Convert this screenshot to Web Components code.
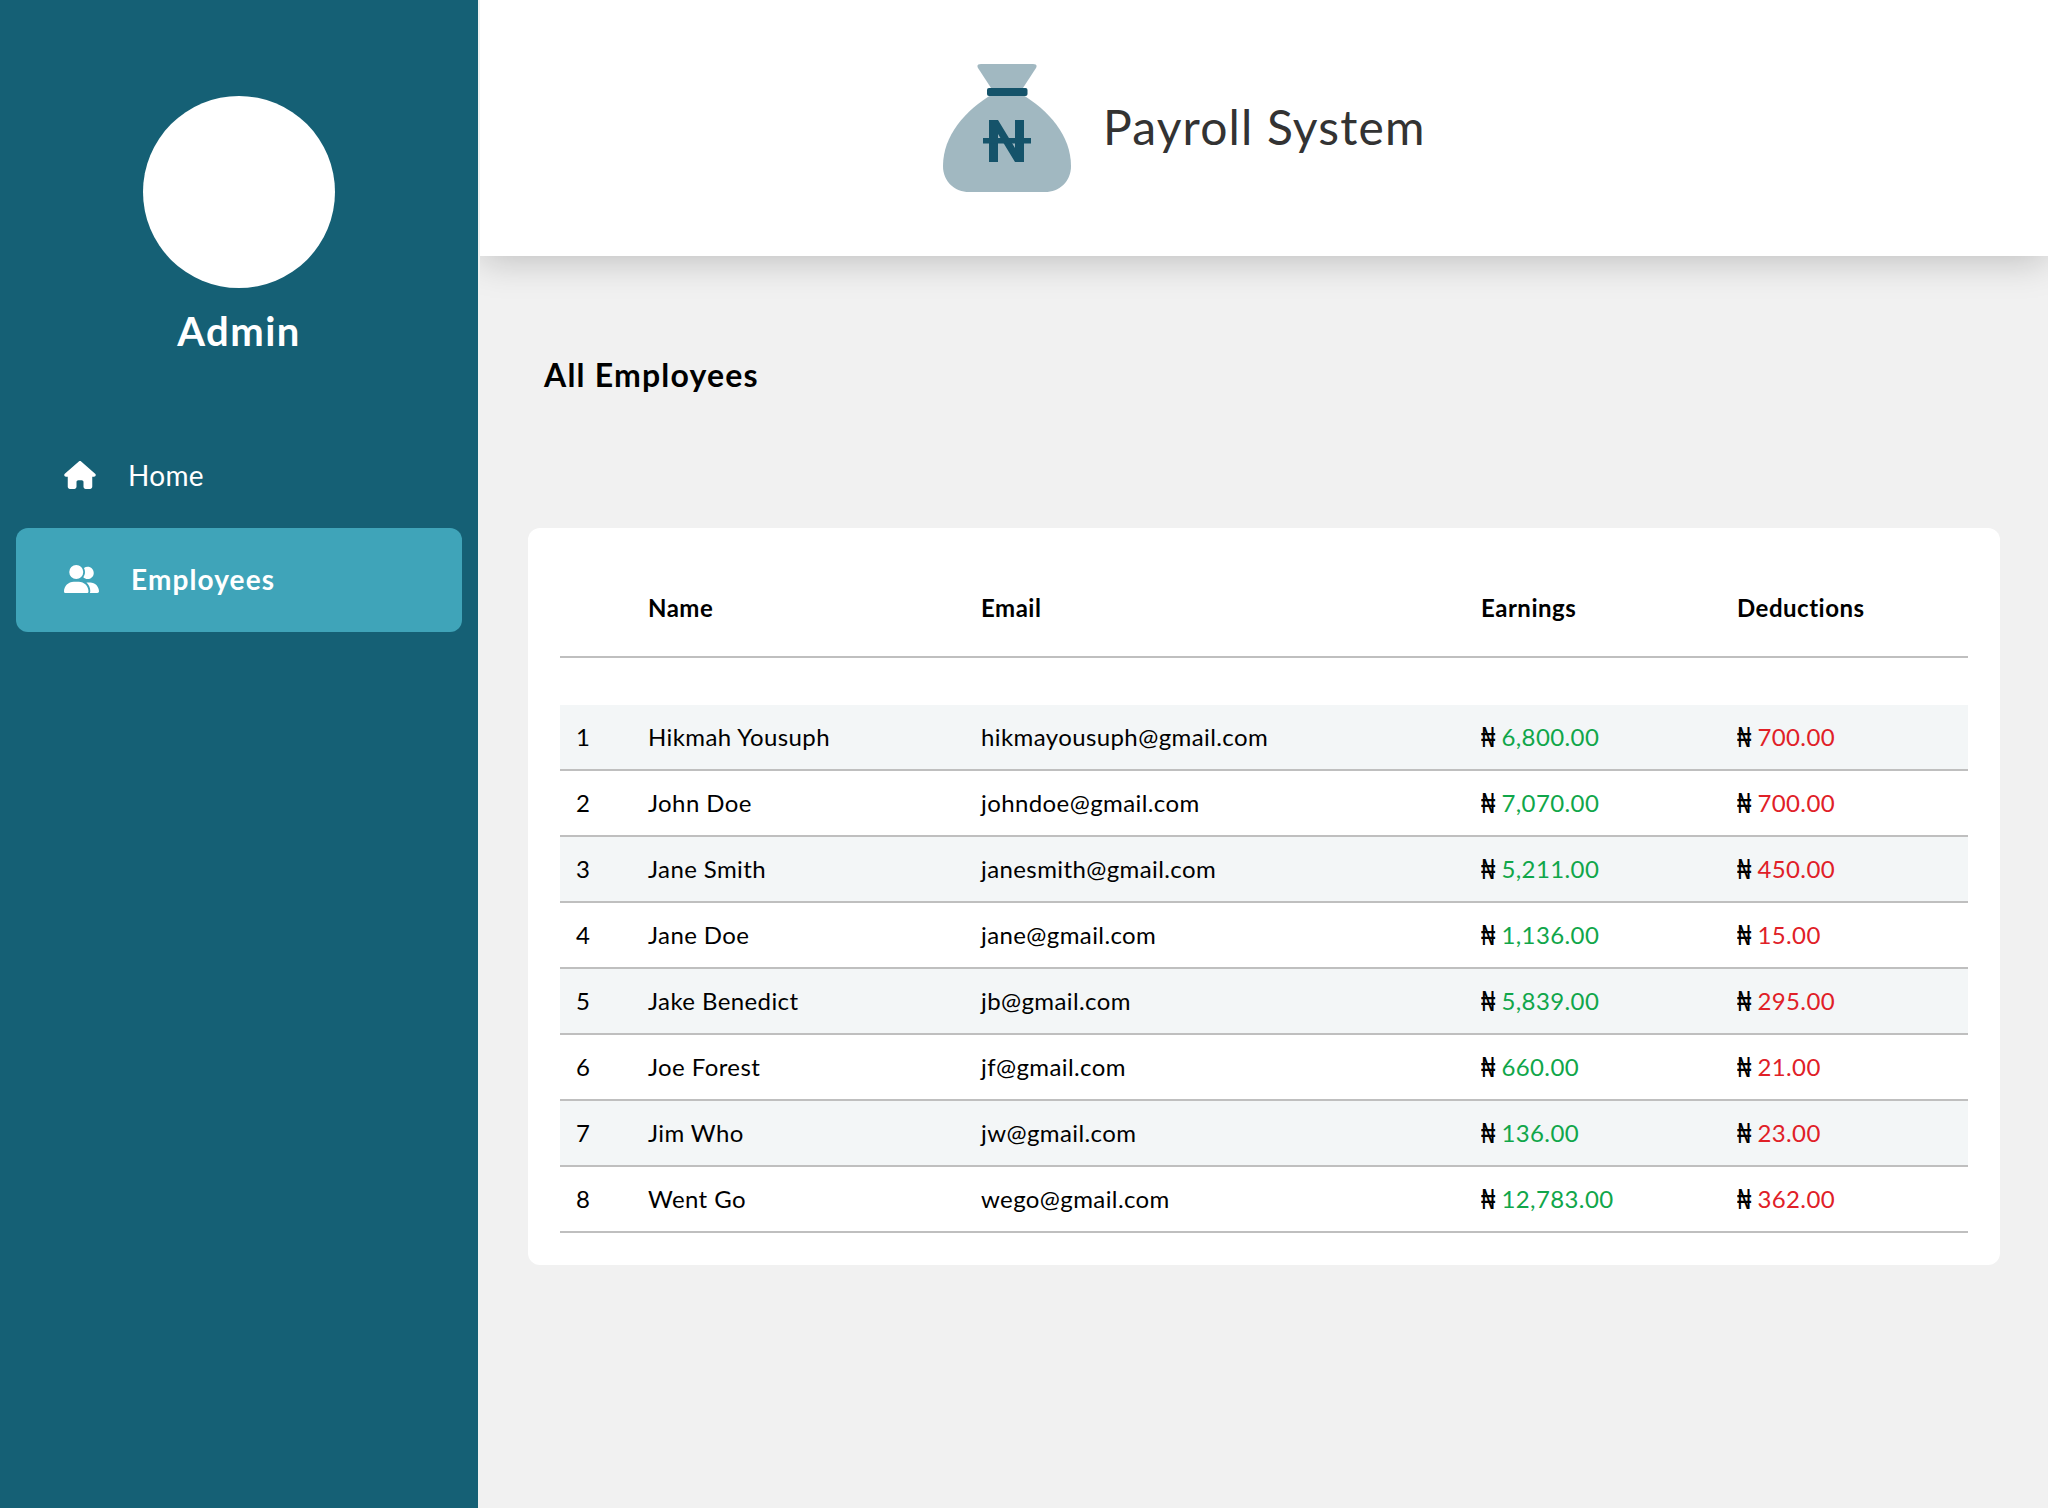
<!DOCTYPE html>
<html lang="en"><head><meta charset="utf-8"><title>Payroll System</title>
<style>
html,body{margin:0;padding:0;height:100%}
body{background:#f1f1f1;font-family:Lato,"Noto Sans",sans-serif;color:#000;}
</style></head><body>
<payroll-app>
  <app-sidebar slot="sidebar" name="Admin">
    <nav-item icon="home">Home</nav-item>
    <nav-item icon="users" active>Employees</nav-item>
  </app-sidebar>
  <app-header slot="header" title-text="Payroll System"></app-header>
  <page-title>All Employees</page-title>
  <employee-table>
    <employee-row n="1" name="Hikmah Yousuph" email="hikmayousuph@gmail.com" earn="6,800.00" ded="700.00"></employee-row>
    <employee-row n="2" name="John Doe" email="johndoe@gmail.com" earn="7,070.00" ded="700.00"></employee-row>
    <employee-row n="3" name="Jane Smith" email="janesmith@gmail.com" earn="5,211.00" ded="450.00"></employee-row>
    <employee-row n="4" name="Jane Doe" email="jane@gmail.com" earn="1,136.00" ded="15.00"></employee-row>
    <employee-row n="5" name="Jake Benedict" email="jb@gmail.com" earn="5,839.00" ded="295.00"></employee-row>
    <employee-row n="6" name="Joe Forest" email="jf@gmail.com" earn="660.00" ded="21.00"></employee-row>
    <employee-row n="7" name="Jim Who" email="jw@gmail.com" earn="136.00" ded="23.00"></employee-row>
    <employee-row n="8" name="Went Go" email="wego@gmail.com" earn="12,783.00" ded="362.00"></employee-row>
  </employee-table>
</payroll-app>
<script>
const ICONS={
 home:'<svg width="32" height="28" viewBox="0 0 576 512" fill="#fff"><path d="M575.8 255.5c0 18-15 32.1-32 32.1h-32l.7 160.2c0 2.7-.2 5.4-.5 8.1V472c0 22.1-17.9 40-40 40H456c-1.1 0-2.2 0-3.3-.1c-1.4 .1-2.8 .1-4.2 .1H416 392c-22.1 0-40-17.9-40-40V448 384c0-17.7-14.3-32-32-32H256c-17.7 0-32 14.3-32 32v64 24c0 22.1-17.9 40-40 40H160 128.1c-1.5 0-3-.1-4.5-.2c-1.2 .1-2.4 .2-3.6 .2H104c-22.1 0-40-17.9-40-40V360c0-.9 0-1.9 .1-2.8V287.6H32c-18 0-32-14-32-32.1c0-9 3-17 10-24L266.4 8c7-7 15-8 22-8s15 2 21 7L564.8 231.5c8 7 12 15 11 24z"/></svg>',
 users:'<svg width="35" height="28" viewBox="0 0 640 512" fill="#fff"><path d="M96 128a128 128 0 1 1 256 0A128 128 0 1 1 96 128zM0 482.3C0 383.8 79.8 304 178.3 304h91.4C368.2 304 448 383.8 448 482.3c0 16.4-13.3 29.7-29.7 29.7H29.7C13.3 512 0 498.7 0 482.3zM609.3 512H471.4c5.4-9.4 8.6-20.3 8.6-32v-8c0-60.7-27.1-115.2-69.8-151.8c2.4-.1 4.7-.2 7.1-.2h61.4C567.8 320 640 392.2 640 481.3c0 17-13.8 30.7-30.7 30.7zM432 256c-31 0-59-12.6-79.3-32.9C372.4 196.5 384 163.6 384 128c0-26.8-6.6-52.1-18.3-74.3C384.3 40.1 407.2 32 432 32c61.9 0 112 50.1 112 112s-50.1 112-112 112z"/></svg>'
};
function def(tag,html){
  customElements.define(tag,class extends HTMLElement{
    constructor(){super();this.attachShadow({mode:'open'});}
    connectedCallback(){
      this.shadowRoot.innerHTML=typeof html==='function'?html(this):html;
    }
  });
}
def('payroll-app',`<style>
:host{display:grid;grid-template-columns:478px 1fr;column-gap:2px;min-height:1508px;width:2048px}
.main{overflow:hidden;min-width:0;height:1508px}
.content{padding:0 48px 0 48px}
</style>
<slot name="sidebar"></slot>
<div class="main"><slot name="header"></slot><div class="content"><slot></slot></div></div>`);
def('app-sidebar',el=>`<style>
:host{display:flex;flex-direction:column;align-items:stretch;background:#156075;color:#fff;padding:96px 16px 0;box-sizing:border-box;height:1508px}
.avatar{width:192px;height:192px;border-radius:50%;background:#fff;align-self:center}
.name{font-size:40px;font-weight:700;line-height:48px;margin-top:19px;text-align:center;letter-spacing:1.45px}
nav{display:flex;flex-direction:column;margin-top:69px}
</style>
<div class="avatar"></div><div class="name">${el.getAttribute('name')}</div><nav><slot></slot></nav>`);
def('nav-item',el=>{const a=el.hasAttribute('active');return `<style>
:host{display:flex;align-items:center;height:104px;padding-left:48px;border-radius:12px;color:#fff;font-size:28px;${a?'background:#3fa4b9;font-weight:700;':''}}
.i{display:flex;margin:0 32px 3px 0}
.t{letter-spacing:${a?1.1:.3}px;padding-bottom:2px}
</style><span class="i">${ICONS[el.getAttribute('icon')]}</span><span class="t"><slot></slot></span>`});
def('app-header',el=>`<style>
:host{display:flex;align-items:center;height:256px;background:#fff;padding-left:463px;box-shadow:0 4px 36px rgba(0,0,0,.22);position:relative;box-sizing:border-box}
svg{display:block;margin-right:32px}
h1{margin:-2px 0 0;font-size:48px;font-weight:400;color:#333;letter-spacing:1.15px;line-height:1}
</style>
<svg width="128" height="128" viewBox="0 0 128 128">
<path fill="#a1b8c1" d="M38 0H90Q95 0 93 4L78 27H50L35 4Q33 0 38 0Z"/>
<path fill="#a1b8c1" d="M50 30H78C106 46 128 72 128 102C128 118 116 128 102 128H26C12 128 0 118 0 102C0 72 22 46 50 30Z"/>
<rect fill="#15536a" x="44" y="24" width="40.5" height="8" rx="2"/>
<path fill="#15536a" d="M46 56H55L72 84V56H81V98H72L55 70V98H46Z"/>
<rect fill="#15536a" x="40" y="74" width="48" height="5.5"/>
</svg><h1>${el.getAttribute('title-text')}</h1>`);
def('page-title',`<style>
:host{display:block;font-size:32px;font-weight:700;line-height:40px;padding:99px 0 0 16px;height:173px;letter-spacing:1.2px}
</style><slot></slot>`);
const COLS='grid-template-columns:72px 333px 500px 256px 1fr;';
def('employee-table',`<style>
:host{display:block;background:#fff;border-radius:12px;padding:32px;width:1472px;box-sizing:border-box;height:737px}
.head{display:grid;${COLS}padding-left:16px;height:96px;align-items:center;border-bottom:2px solid #bfbfbf;font-size:24px;font-weight:700;margin-bottom:47px;letter-spacing:.5px}
.head span{padding-bottom:2px}
</style><div class="head"><span></span><span>Name</span><span>Email</span><span>Earnings</span><span>Deductions</span></div><slot></slot>`);
def('employee-row',el=>{const g=a=>el.getAttribute(a);const n=+g('n');return `<style>
:host{display:grid;${COLS}padding-left:16px;height:64px;align-items:center;border-bottom:2px solid #bfbfbf;font-size:24px;background:${n%2?'#f3f6f7':'#fff'};letter-spacing:.4px}
.c{padding-bottom:2px}
.m i{display:inline-block;font-style:normal;color:#000;font-family:"Liberation Mono",monospace;letter-spacing:0;margin-right:6px;transform:scaleY(1.2);transform-origin:50% 62%}
.e{color:#10a64a}.d{color:#e02027}
</style><span class="c">${n}</span><span class="c">${g('name')}</span><span class="c">${g('email')}</span><span class="m e"><i>₦</i>${g('earn')}</span><span class="m d"><i>₦</i>${g('ded')}</span>`});
</script>
</body></html>
